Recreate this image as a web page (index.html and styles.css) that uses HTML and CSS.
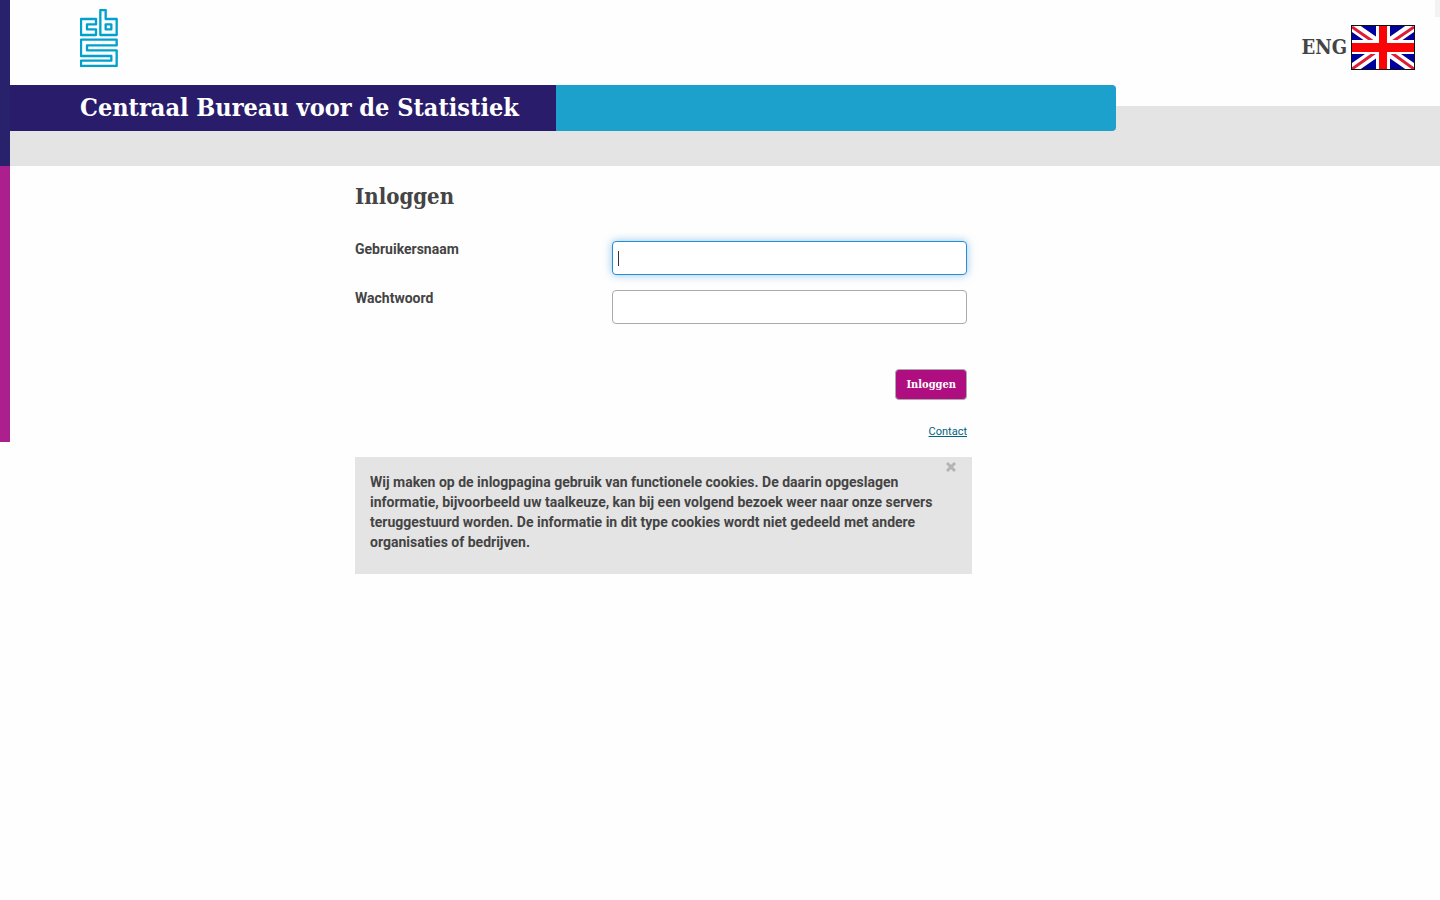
FILE: index.html
```html
<!DOCTYPE html>
<html lang="nl">
<head>
<meta charset="utf-8">
<meta name="viewport" content="width=device-width, initial-scale=1">
<title>Inloggen - Centraal Bureau voor de Statistiek</title>
<link rel="stylesheet" href="styles.css">
</head>
<body>
<div class="page">
  <div class="stripe"><div class="stripe-navy"></div><div class="stripe-magenta"></div></div>
  <div class="content">
    <header>
      <div class="masthead">
        <svg class="logo" viewBox="30 27 114 174" role="img" aria-label="CBS">
          <path d="M78 57H33V105H78V88H51V73H78Z"/>
          <path d="M91 30H107V57H140V105H91Z"/>
          <path d="M107 73H124V88H107Z"/>
          <path d="M33 119H140V136H51V151H140V198H33V182H124V168H33Z"/>
        </svg>
        <a class="language" href="#">
          <span>ENG</span>
          <svg class="flag" viewBox="0 0 62 43" preserveAspectRatio="none" aria-hidden="true">
            <path fill="#00009c" d="M0 0H62V43H0Z"/>
            <path stroke="#fff" stroke-width="10" d="M0 0L62 43M62 0L0 43"/>
            <path stroke="#e01c35" stroke-width="3" d="M0 1L26 19M62 1L37 18M0 43L24 26M62 43L37 25"/>
            <path fill="#fff" d="M24 0H38V14H62V28H38V43H24V28H0V14H24Z"/>
            <path fill="#f90505" d="M27 0H35V17H62V26H35V43H27V26H0V17H27Z"/>
          </svg>
        </a>
        <span class="corner"></span>
      </div>
      <div class="band">
        <div class="titlebar"><h1>Centraal Bureau voor de Statistiek</h1></div>
      </div>
    </header>
    <main>
      <form>
        <h2>Inloggen</h2>
        <div class="field"><label for="user">Gebruikersnaam</label><input class="active" id="user" type="text" autofocus></div>
        <div class="field"><label for="pass">Wachtwoord</label><input id="pass" type="password"></div>
        <div class="actions"><button class="submit" type="submit">Inloggen</button><a href="#">Contact</a></div>
      </form>
      <section class="notice">
        <button class="close" type="button" aria-label="Sluiten"><svg viewBox="0 0 10 10" aria-hidden="true"><path d="M1 1L9 9M9 1L1 9"/></svg></button>
        <p>Wij maken op de inlogpagina gebruik van functionele cookies. De daarin opgeslagen informatie, bijvoorbeeld uw taalkeuze, kan bij een volgend bezoek weer naar onze servers teruggestuurd worden. De informatie in dit type cookies wordt niet gedeeld met andere organisaties of bedrijven.</p>
      </section>
    </main>
  </div>
</div>
</body>
</html>
```
FILE: styles.css
```css
* { box-sizing: border-box; }
body {
  margin: 0;
  background: #fefefe;
  color: #444;
  font: 14px/20px Roboto, "Liberation Sans", sans-serif;
}
.page { display: flex; }
.stripe { flex: 0 0 10px; }
.stripe-navy { height: 166px; background: #28216b; }
.stripe-magenta { height: 276px; background: #ab1f8e; }
.content { flex: 1; min-width: 0; }
.masthead {
  position: relative;
  display: flex;
  justify-content: space-between;
  align-items: flex-start;
  padding: 9px 25px 15px 70px;
}
.logo { width: 38px; height: 58px; margin-bottom: 3px; fill: none; stroke: #00a1cd; stroke-width: 7; stroke-linejoin: round; }
.language {
  display: flex;
  align-items: center;
  gap: 4px;
  margin-top: 16px;
  color: #444;
  font: bold 20px/43px "DejaVu Serif Condensed", "DejaVu Serif", serif;
  text-decoration: none;
}
.flag { width: 64px; height: 45px; border: 1px solid #111; fill: none; }
.corner { position: absolute; top: 0; right: 0; width: 5px; height: 17px; background: #f2f2f2; }
.band {
  padding-bottom: 35px;
  background: linear-gradient(transparent 21px, #e4e4e4 21px);
}
.titlebar {
  display: flex;
  width: 77.35%;
  background: #1ba1cc;
  border-radius: 0 4px 4px 0;
}
h1, h2, .submit { font-family: "DejaVu Serif Condensed", "DejaVu Serif", serif; font-weight: bold; }
h1 {
  flex: 0 0 546px;
  margin: 0;
  padding-left: 70px;
  background: #291d6b;
  color: #fff;
  font-size: 25px;
  line-height: 46px;
  white-space: nowrap;
}
main { max-width: 617px; margin-left: calc(50% - 370px); }
form { padding: 15px 5px 0 0; }
h2 { margin: 0 0 30px; font-size: 22px; line-height: 30px; }
.field { display: flex; justify-content: space-between; align-items: flex-start; margin-bottom: 15px; }
.field label { margin-top: -2px; font-weight: bold; }
.field input {
  width: 58%;
  height: 34px;
  padding: 5px;
  border: 1px solid #aaa;
  border-radius: 4px;
  background: #fff;
  color: #444;
  font: inherit;
  outline: none;
}
.field .active {
  border-color: #278dd5;
  background: linear-gradient(#333, #333) 5px 9px / 1px 15px no-repeat #fff;
  box-shadow: 0 0 8px rgba(39, 141, 213, .5);
  caret-color: transparent;
}
.actions { display: flex; flex-direction: column; align-items: flex-end; padding-top: 30px; }
.submit {
  height: 31px;
  padding: 0 10px;
  border: 1px solid #aaa;
  border-radius: 4px;
  background: #af0e80;
  color: #fff;
  font-size: 11px;
}
.actions a { margin-top: 22px; color: #00647d; font-size: 11px; line-height: 20px; }
.notice { position: relative; margin-top: 15px; padding: 15px 35px 22px 15px; background: #e4e4e4; font-weight: bold; }
.notice p { margin: 0; }
.close { position: absolute; top: 4px; right: 15px; width: 12px; height: 12px; padding: 1px; border: 0; background: none; }
.close svg { display: block; width: 10px; height: 10px; stroke: #b4b4b4; stroke-width: 3; }
```
